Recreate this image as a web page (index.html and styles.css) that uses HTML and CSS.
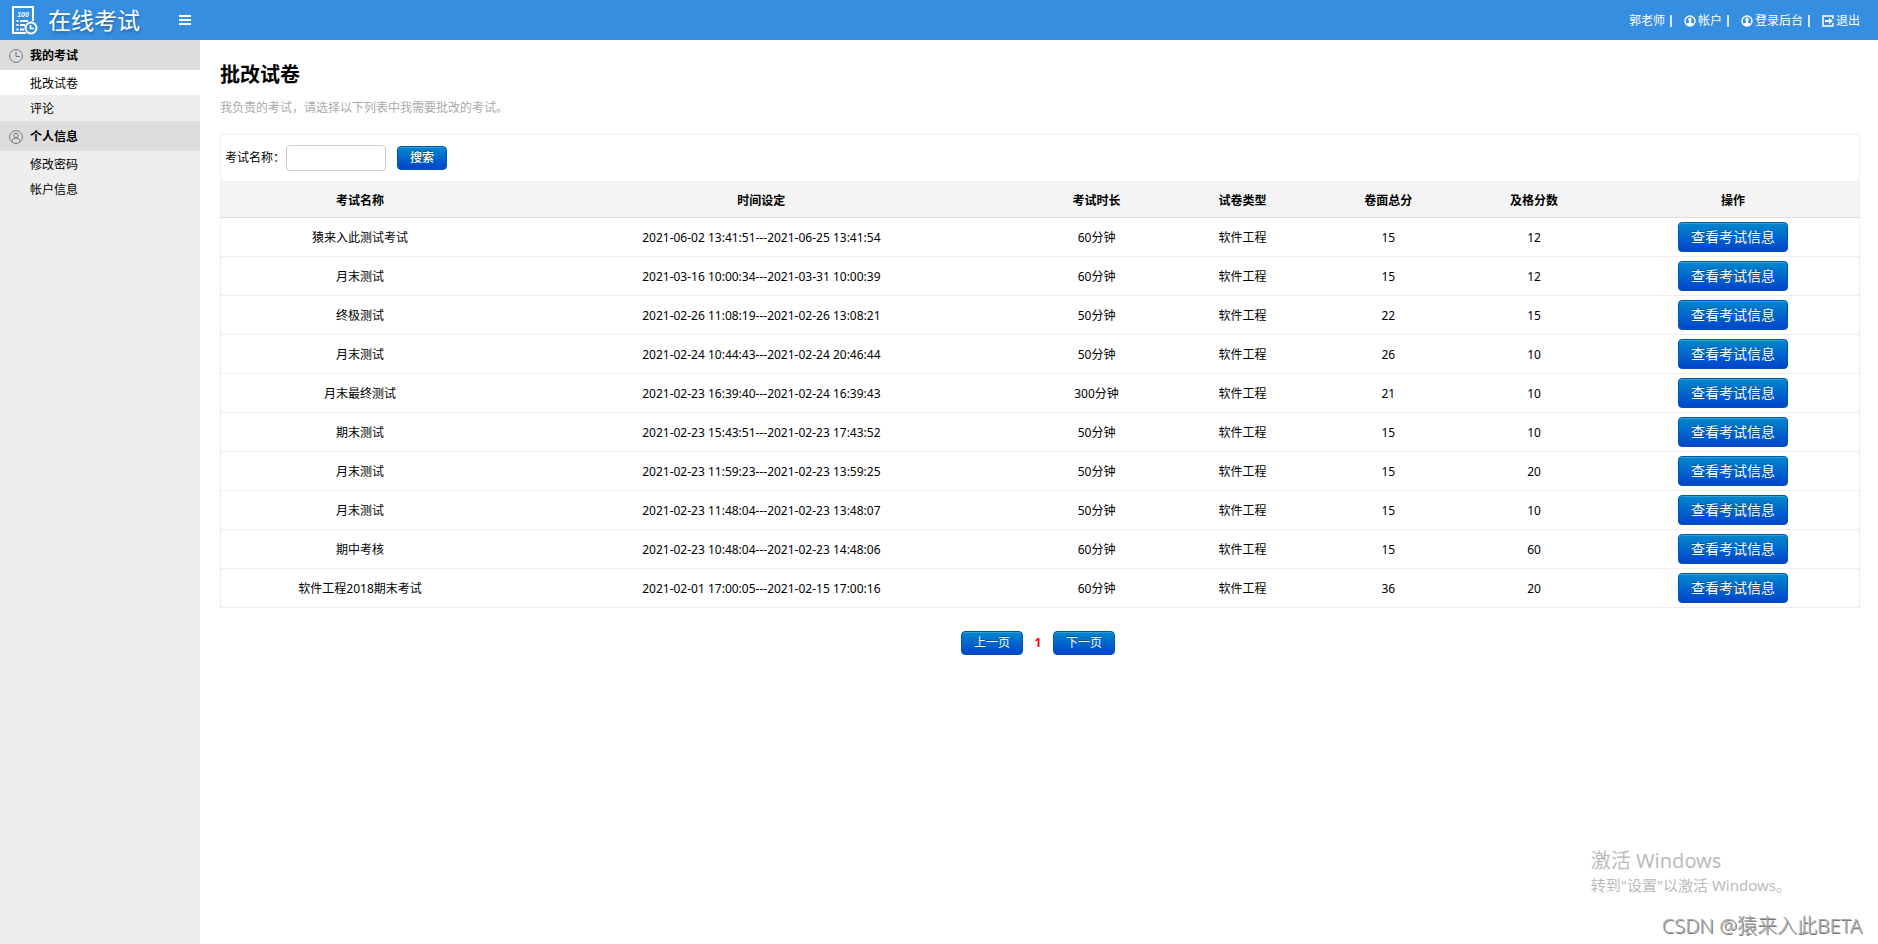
FILE: index.html
```html
<!DOCTYPE html>
<html lang="zh-CN">
<head>
    <meta charset="UTF-8">
    <meta name="viewport" content="width=device-width, initial-scale=1.0">
    <title>在线考试</title>
    <link rel="stylesheet" href="styles.css">
</head>
<body>
    <svg class="symbols" aria-hidden="true">
        <symbol id="icon-account" viewBox="0 0 12 12">
            <circle cx="6" cy="6" r="5" fill="none" stroke="currentColor" stroke-width="1.4"/>
            <ellipse cx="6" cy="4.6" rx="1.7" ry="2.1" fill="currentColor"/>
            <path d="M5 5h2v2.6l2 1v1.6H3V8.6l2-1z" fill="currentColor"/>
        </symbol>
        <symbol id="icon-exit" viewBox="0 0 12 12">
            <path d="M11 4V1H1v10h10V8" fill="none" stroke="currentColor" stroke-width="1.5"/>
            <path d="M3 5h4V3l4 3-4 3V7H3z" fill="currentColor"/>
        </symbol>
    </svg>

    <div class="header">
        <a href="#" class="logo">
            <svg width="26" height="30" viewBox="0 0 26 30" fill="none" stroke="currentColor">
                <path d="M14 28H1V2h20v14" stroke-width="2"/>
                <text x="11" y="12" class="score">100</text>
                <path d="M4.5 16h2M4.5 20h2M4.5 24.5h2M8 16h8M8 20h5M8 24.5h4" stroke-width="2"/>
                <circle cx="19" cy="23" r="5.5" stroke-width="2"/>
                <path d="M18.5 20v3.5H22" stroke-width="1.6"/>
            </svg>
            <span>在线考试</span>
        </a>
        <button type="button" class="toggle" aria-label="菜单">
            <svg width="12" height="10" viewBox="0 0 12 10" fill="currentColor">
                <path d="M0 0h12v2H0zM0 4h12v2H0zM0 8h12v2H0z"/>
            </svg>
        </button>
        <div class="user-nav">
            <a href="#">郭老师</a><i></i>
            <a href="#"><svg><use href="#icon-account"/></svg>帐户</a><i></i>
            <a href="#"><svg><use href="#icon-account"/></svg>登录后台</a><i></i>
            <a href="#"><svg><use href="#icon-exit"/></svg>退出</a>
        </div>
    </div>

    <div class="wrapper">
        <div class="sidebar">
            <h3>
                <svg width="14" height="14" viewBox="0 0 14 14" fill="none" stroke="currentColor">
                    <circle cx="7" cy="7" r="6.4"/>
                    <path d="M7 2.5V7.5h4"/>
                </svg>
                我的考试
            </h3>
            <ul>
                <li class="active"><a href="#">批改试卷</a></li>
                <li><a href="#">评论</a></li>
            </ul>
            <h3>
                <svg width="14" height="14" viewBox="0 0 14 14" fill="none" stroke="currentColor">
                    <circle cx="7" cy="7" r="6.4"/>
                    <circle cx="7" cy="5.4" r="2.2"/>
                    <path d="M3.2 11.8v-1q0-2 2.4-2.6h2.8q2.4.6 2.4 2.6v1"/>
                </svg>
                个人信息
            </h3>
            <ul>
                <li><a href="#">修改密码</a></li>
                <li><a href="#">帐户信息</a></li>
            </ul>
        </div>

        <div class="main">
            <h1>批改试卷</h1>
            <p class="tip">我负责的考试，请选择以下列表中我需要批改的考试。</p>

            <form class="search" onsubmit="return false">
                <label for="examName">考试名称：</label>
                <input type="text" id="examName">
                <button type="submit" class="btn btn-search">搜索</button>
            </form>

            <table>
                <thead>
                    <tr>
                        <th class="col-name">考试名称</th>
                        <th class="col-time">时间设定</th>
                        <th class="col-small">考试时长</th>
                        <th class="col-small">试卷类型</th>
                        <th class="col-small">卷面总分</th>
                        <th class="col-small">及格分数</th>
                        <th>操作</th>
                    </tr>
                </thead>
                <tbody id="exams"></tbody>
            </table>

            <div class="pager">
                <button type="button" class="btn">上一页</button>
                <span>1</span>
                <button type="button" class="btn">下一页</button>
            </div>
        </div>
    </div>

    <div class="activate">
        <p>激活 Windows</p>
        <p>转到"设置"以激活 Windows。</p>
    </div>
    <div class="watermark">CSDN @猿来入此BETA</div>

    <script>
        // name, time range, duration, type, total, pass mark
        const exams = [
            ["猿来入此测试考试", "2021-06-02 13:41:51---2021-06-25 13:41:54", "60分钟", "软件工程", 15, 12],
            ["月末测试", "2021-03-16 10:00:34---2021-03-31 10:00:39", "60分钟", "软件工程", 15, 12],
            ["终极测试", "2021-02-26 11:08:19---2021-02-26 13:08:21", "50分钟", "软件工程", 22, 15],
            ["月末测试", "2021-02-24 10:44:43---2021-02-24 20:46:44", "50分钟", "软件工程", 26, 10],
            ["月末最终测试", "2021-02-23 16:39:40---2021-02-24 16:39:43", "300分钟", "软件工程", 21, 10],
            ["期末测试", "2021-02-23 15:43:51---2021-02-23 17:43:52", "50分钟", "软件工程", 15, 10],
            ["月末测试", "2021-02-23 11:59:23---2021-02-23 13:59:25", "50分钟", "软件工程", 15, 20],
            ["月末测试", "2021-02-23 11:48:04---2021-02-23 13:48:07", "50分钟", "软件工程", 15, 10],
            ["期中考核", "2021-02-23 10:48:04---2021-02-23 14:48:06", "60分钟", "软件工程", 15, 60],
            ["软件工程2018期末考试", "2021-02-01 17:00:05---2021-02-15 17:00:16", "60分钟", "软件工程", 36, 20]
        ];

        let rows = "";
        for (const exam of exams) {
            rows += "<tr>" + exam.map(value => `<td>${value}</td>`).join("") +
                `<td class="action"><button type="button" class="btn btn-view">查看考试信息</button></td></tr>`;
        }
        document.querySelector("#exams").innerHTML = rows;
    </script>
</body>
</html>
```
FILE: styles.css
```css
* {
    box-sizing: border-box;
}

body {
    margin: 0;
    min-height: 100vh;
    display: flex;
    flex-direction: column;
    font: 12px/20px "Noto Sans", "Noto Sans CJK SC", sans-serif;
    color: #000;
    background-color: #fff;
}

h1, h3, p, ul {
    margin: 0;
    padding: 0;
}

a {
    color: inherit;
    text-decoration: none;
}

button, input {
    font: inherit;
}

.symbols {
    display: none;
}

.header {
    display: flex;
    align-items: center;
    height: 40px;
    padding: 0 18px 0 12px;
    color: #fff;
    background-color: #368ee0;
}

.logo {
    display: flex;
    align-items: center;
    gap: 10px;
    width: 167px;
    font-size: 23px;
    text-shadow: 1px 2px 3px rgba(0, 0, 0, 0.3);
}

.logo .score {
    font: italic bold 7px "Liberation Sans", sans-serif;
    text-anchor: middle;
    text-shadow: none;
    fill: currentColor;
    stroke: none;
}

.toggle {
    display: flex;
    padding: 0;
    border: 0;
    color: #fff;
    background: none;
    cursor: pointer;
}

.user-nav {
    display: flex;
    align-items: center;
    margin-left: auto;
    padding-top: 2px;
}

.user-nav a {
    display: flex;
    align-items: center;
    gap: 2px;
}

.user-nav svg {
    width: 12px;
    height: 12px;
}

.user-nav i {
    width: 2px;
    height: 12px;
    margin: 0 12px 0 5px;
    background-color: #d5e6f5;
}

.wrapper {
    display: flex;
    flex: 1;
}

.sidebar {
    flex: none;
    width: 200px;
    background-color: #eee;
}

.sidebar h3 {
    display: flex;
    align-items: center;
    gap: 7px;
    height: 30px;
    padding: 2px 0 0 9px;
    font-size: 12px;
    background-color: #ddd;
}

.sidebar svg {
    color: #777;
}

.sidebar ul {
    padding-bottom: 1px;
    list-style: none;
}

.sidebar li a {
    display: block;
    padding: 4px 0 1px 30px;
}

.sidebar .active {
    background-color: #fff;
}

.main {
    flex: 1;
    padding: 21px 18px 20px 20px;
}

.main h1 {
    font-size: 20px;
    line-height: 28px;
}

.tip {
    margin: 9px 0 16px;
    color: #aaa;
}

.search {
    display: flex;
    align-items: center;
    height: 47px;
    padding-left: 4px;
    border: 1px solid #eee;
    border-bottom: 0;
}

.search input {
    width: 100px;
    height: 26px;
    margin: 0 11px 0 1px;
    padding: 0 5px;
    border: 1px solid #ccc;
    border-radius: 4px;
}

.btn {
    height: 24px;
    padding: 0 12px;
    border: 1px solid #0055b3;
    border-radius: 4px;
    color: #fff;
    line-height: 20px;
    text-shadow: 0 -1px 0 rgba(0, 0, 0, 0.25);
    background-image: linear-gradient(#08c, #04c);
    box-shadow: inset 0 1px 0 rgba(255, 255, 255, 0.2);
    cursor: pointer;
}

.btn-search {
    font-weight: 500;
}

.btn-view {
    display: block;
    height: 30px;
    margin: 0 auto;
    font-size: 14px;
}

table {
    width: 100%;
    table-layout: fixed;
    border-collapse: collapse;
    border: 1px solid #eee;
}

th, td {
    padding: 5px 0 3px;
    text-align: center;
    border-bottom: 1px solid #eee;
}

th {
    height: 36px;
    background-color: #f4f4f4;
    border-bottom-color: #ddd;
}

td.action {
    padding: 4px 0;
}

.col-name {
    width: 17%;
}

.col-time {
    width: 32%;
}

.col-small {
    width: 8.9%;
}

.pager {
    display: flex;
    justify-content: center;
    align-items: center;
    margin: 23px 4px 0 0;
}

.pager span {
    width: 30px;
    text-align: center;
    font-weight: bold;
    color: #f00;
}

/* overlays */
.activate {
    position: absolute;
    right: 87px;
    bottom: 48px;
    color: #bbb;
    font-size: 15px;
    line-height: 22px;
}

.activate p:first-child {
    font-size: 20px;
    line-height: 26px;
}

.watermark {
    position: absolute;
    right: 16px;
    bottom: 4px;
    font-size: 20px;
    line-height: 28px;
    font-weight: 300;
    color: #aaa;
    text-shadow: 1px 1px 0 #777;
}
```
